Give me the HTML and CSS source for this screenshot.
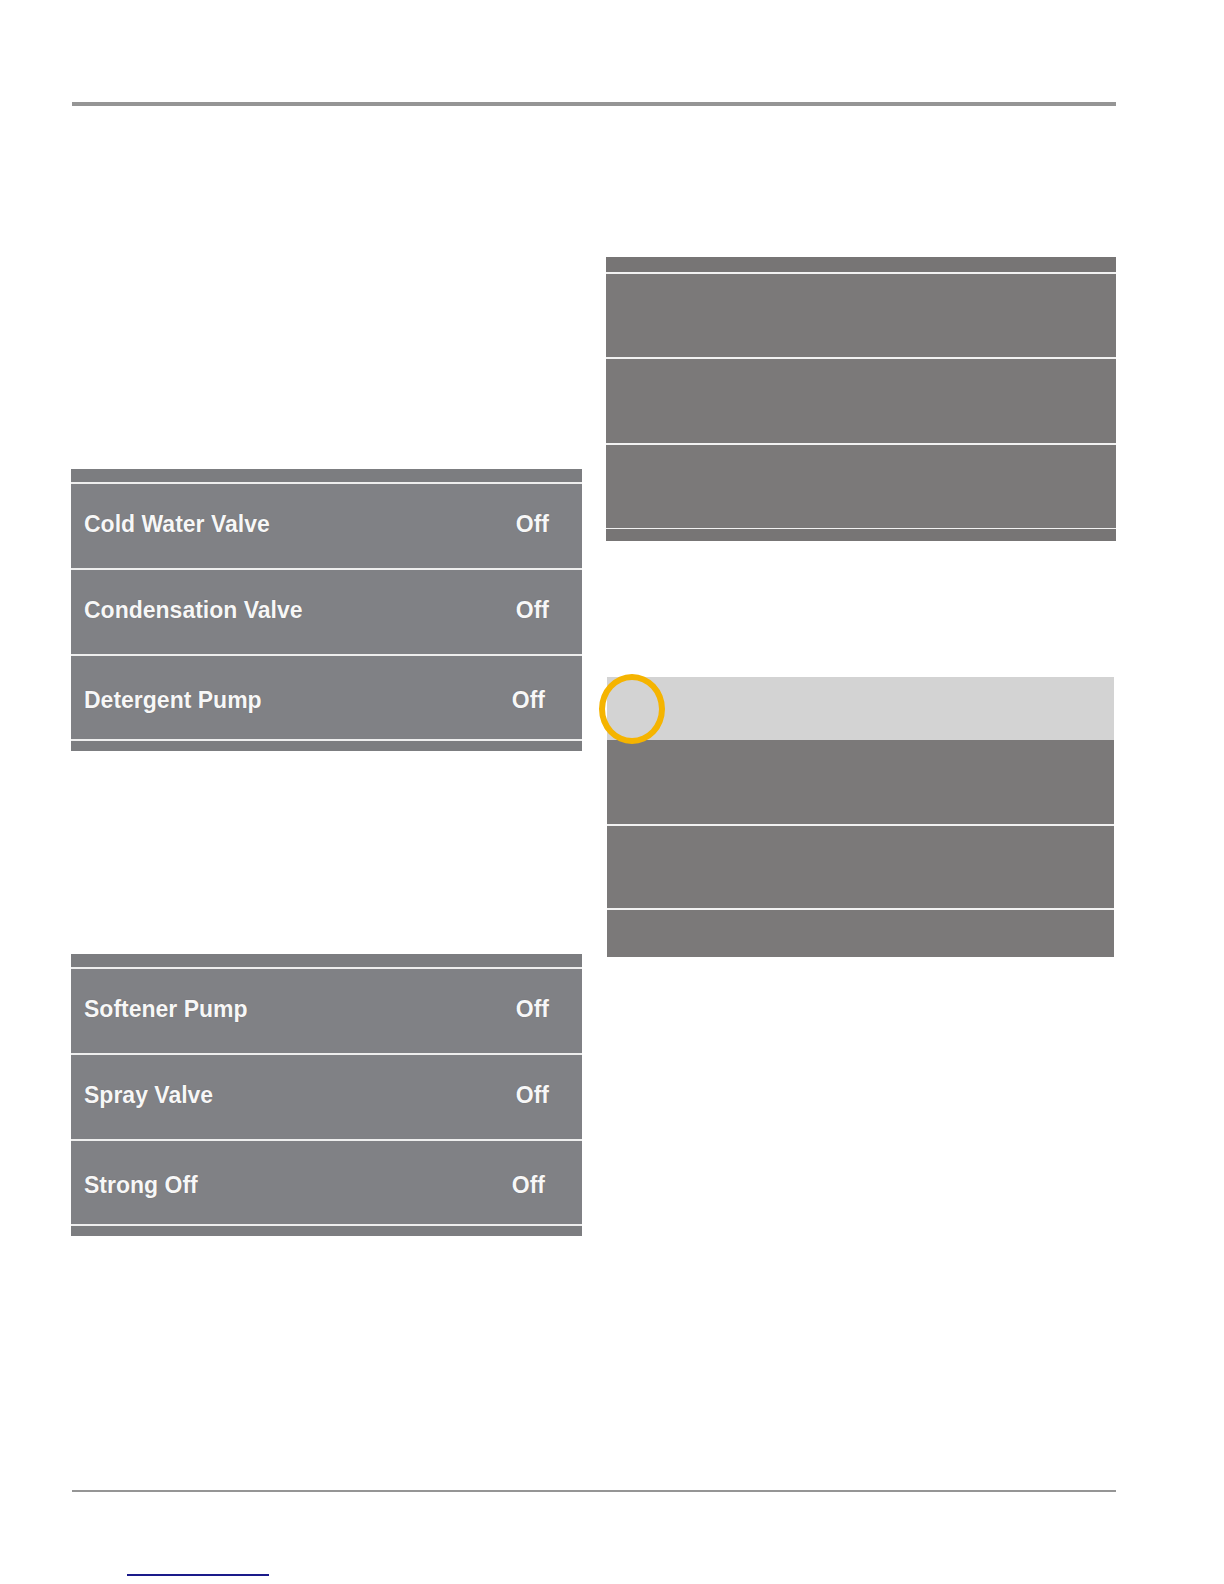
FILE: index.html
```html
<!DOCTYPE html>
<html lang="en">
<head>
<meta charset="utf-8">
<title>Outputs</title>
<link rel="stylesheet" href="styles.css">
</head>
<body>
<div class="page">
  <div class="rule-top"></div>
  <main class="columns">
    <section class="col col-left">
      <div class="panel panel-a">
        <div class="bar-top"></div>
        <div class="row"><span class="label">Cold Water Valve</span><span class="value">Off</span></div>
        <div class="row"><span class="label">Condensation Valve</span><span class="value">Off</span></div>
        <div class="row row-last"><span class="label">Detergent Pump</span><span class="value">Off</span></div>
        <div class="bar-bottom"></div>
      </div>
      <div class="panel panel-b">
        <div class="bar-top"></div>
        <div class="row"><span class="label">Softener Pump</span><span class="value">Off</span></div>
        <div class="row"><span class="label">Spray Valve</span><span class="value">Off</span></div>
        <div class="row row-last"><span class="label">Strong Off</span><span class="value">Off</span></div>
        <div class="bar-bottom"></div>
      </div>
    </section>
    <section class="col col-right">
      <div class="rpanel rpanel-a">
        <div class="rbar-top"></div>
        <div class="rrow"></div>
        <div class="rrow rrow-mid"></div>
        <div class="rrow"></div>
        <div class="rbar-bottom"></div>
      </div>
      <div class="rpanel rpanel-b">
        <div class="rrow-light"><span class="focus-ring"></span></div>
        <div class="rrow2 rrow2-first"></div>
        <div class="rrow2 rrow2-second"></div>
        <div class="rrow2 rrow2-last"></div>
      </div>
    </section>
  </main>
  <div class="rule-bottom"></div>
  <div class="link-line"><a class="link" href="#" aria-label="link"></a></div>
</div>
</body>
</html>
```
FILE: styles.css
```css
html, body {
  margin: 0;
  padding: 0;
  background: #ffffff;
}
body {
  font-family: "Liberation Sans", Arial, sans-serif;
}
.page {
  width: 1045px;
  margin-left: 71px;
  padding-top: 102px;
}
.rule-top {
  margin-left: 1px;
  width: 1044px;
  height: 4px;
  background: #959595;
}
.columns {
  display: grid;
  grid-template-columns: 511px 510px;
  column-gap: 24px;
  height: 1384px;
  align-items: start;
}
.col {
  display: flex;
  flex-direction: column;
}
.col-left .panel-a { margin-top: 363px; }
.col-left .panel-b { margin-top: 203px; }

.panel {
  background: #808185;
  display: flex;
  flex-direction: column;
}
.bar-top {
  height: 13px;
  background: #7c7d80;
}
.bar-bottom {
  height: 10px;
  background: #7c7d80;
  border-top: 2px solid #eeeeee;
}
.row {
  box-sizing: border-box;
  height: 86px;
  border-top: 2px solid #eeeeee;
  display: flex;
  align-items: center;
  justify-content: space-between;
  padding: 0 33px 3px 13px;
  color: #f7f7f7;
  font-weight: bold;
  font-size: 23px;
  text-shadow: 0 0 1px rgba(0,0,0,0.25);
}
.row .label, .row .value { display: block; }
.row-last { padding-right: 37px; padding-top: 5px; padding-bottom: 0; height: 85px; }

.col-right .rpanel-a { margin-top: 151px; }
.col-right .rpanel-b { margin-top: 136px; margin-left: 1px; width: 507px; }

.rpanel {
  background: #7b7979;
  display: flex;
  flex-direction: column;
}
.rbar-top {
  height: 15px;
  background: #777575;
}
.rrow {
  height: 83px;
  border-top: 2px solid #f2f2f2;
}
.rrow-mid { height: 84px; }
.rbar-bottom {
  height: 12px;
  border-top: 1px solid #f2f2f2;
  background: #777575;
}
.rrow-light {
  height: 63px;
  background: #d3d3d3;
  position: relative;
}
.focus-ring {
  position: absolute;
  left: -8px;
  top: -3px;
  width: 54px;
  height: 58px;
  border: 6px solid #f5b400;
  border-radius: 50%;
}
.rrow2 { background: #7b7979; }
.rrow2-first { height: 84px; }
.rrow2-second { height: 82px; border-top: 2px solid #f2f2f2; }
.rrow2-last { height: 47px; border-top: 2px solid #f2f2f2; }

.rule-bottom {
  margin-left: 1px;
  width: 1044px;
  height: 2px;
  background: #959595;
}
.link-line {
  padding-top: 82px;
  padding-left: 56px;
}
.link {
  display: block;
  width: 142px;
  height: 0;
  border-bottom: 2px solid #1a1a8a;
}
```
